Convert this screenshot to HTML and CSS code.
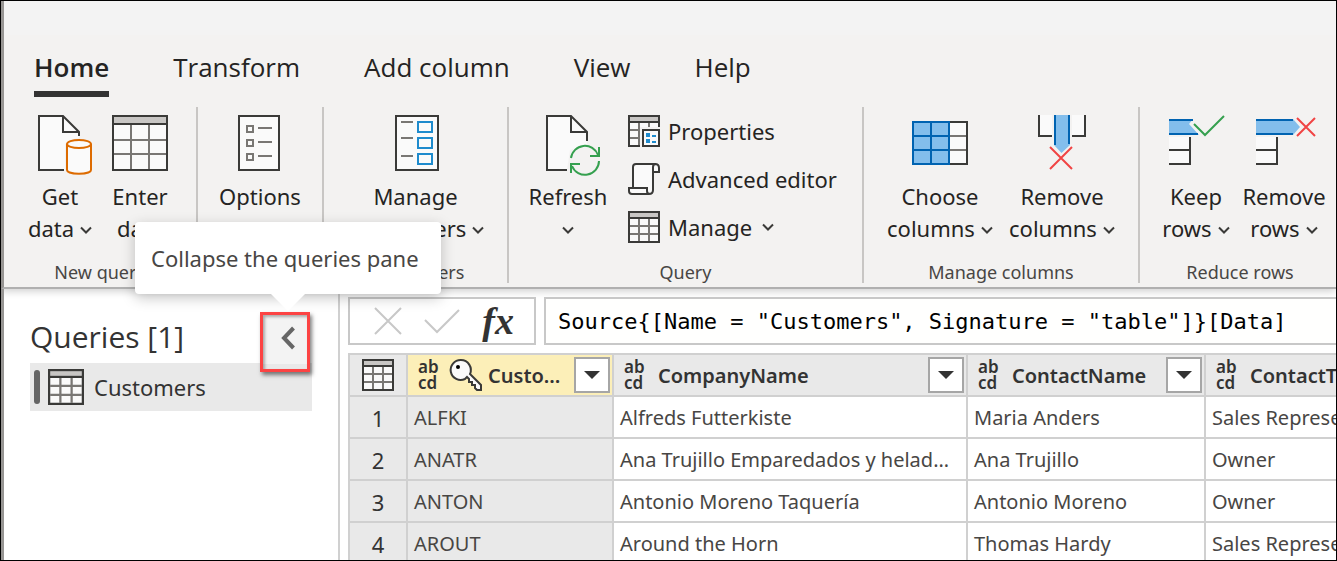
FILE: index.html
```html
<!DOCTYPE html>
<html lang="en">
<head>
<meta charset="utf-8">
<title>Power Query Editor</title>
<link rel="stylesheet" href="styles.css">
</head>
<body>
<svg class="defs" aria-hidden="true">
  <symbol id="table" viewBox="0 0 32 32">
    <path class="paper" d="M1 1H31V31H1Z"/><path class="band" d="M2 2H30V6H2Z"/>
    <path class="grid" d="M11 7V30M21 7V30M2 15H30M2 23H30"/>
    <path class="ink" d="M1 1H31V31H1ZM1 7H31"/>
  </symbol>
  <symbol id="caret" viewBox="0 0 12 8"><path class="caret-line" d="M1 1.500L6 6.500L11 1.500"/></symbol>
</svg>
<div class="app">
  <div class="titlebar"></div>
  <nav class="tabs">
    <button class="tab active">Home</button>
    <button class="tab">Transform</button>
    <button class="tab">Add column</button>
    <button class="tab">View</button>
    <button class="tab">Help</button>
  </nav>

  <div class="ribbon">
    <section class="group g-new">
      <div class="tools">
        <button class="tool w80">
          <svg class="big" viewBox="0 0 64 62"><path class="fill" d="M11 2H35L51 18V56H11Z"/><path class="ink" d="M36 56H11V2H35L51 18V22M35 2V18H51"/><path class="halo" d="M37 30Q51 18 65 30V62H37Z"/><path class="db" d="M39 30V56C39 61 63 61 63 56V30"/><ellipse class="db" cx="51" cy="30" rx="12" ry="4"/></svg>
          <span>Get<br>data<svg class="caret"><use href="#caret"/></svg></span>
        </button>
        <button class="tool w80">
          <svg class="big" viewBox="0 0 64 62"><path class="fill" d="M5 2H59V56H5Z"/><path class="band" d="M6 3H58V9H6Z"/><path class="grid" d="M23 10V55M41 10V55M6 26H58M6 40H58"/><path class="ink" d="M5 2H59V56H5ZM5 10H59"/></svg>
          <span>Enter<br>data</span>
        </button>
      </div>
      <h2>New query</h2>
    </section>
    <section class="group g-options">
      <div class="tools">
        <button class="tool w80">
          <svg class="big" viewBox="0 0 64 62"><path class="paper ink" d="M11 2H51V56H11Z"/><path class="grid" d="M19 12h6v6h-6ZM19 26h6v6h-6ZM19 40h6v6h-6ZM30 14H44M30 28H44M30 42H44"/></svg>
          <span>Options</span>
        </button>
      </div>
    </section>
    <section class="group g-params">
      <div class="tools">
        <button class="tool">
          <svg class="big" viewBox="0 0 64 62"><path class="paper ink" d="M12 2H54V56H12Z"/><path class="grid" d="M17 8H29M17 24H29M17 42H29"/><path class="azure" d="M34 8h14v10h-14ZM34 24h14v10h-14ZM34 40h14v10h-14Z"/></svg>
          <span>Manage<br>parameters<svg class="caret"><use href="#caret"/></svg></span>
        </button>
      </div>
      <h2>Parameters</h2>
    </section>
    <section class="group g-query">
      <div class="tools query-tools">
        <button class="tool w80">
          <svg class="big" viewBox="0 0 64 62"><path class="fill" d="M11 2H35L51 18V30L34 36L31 56H11Z"/><path class="ink" d="M31 56H11V2H35L51 18V27M35 2V18H51"/><path class="green" d="M35 44A14 14 0 0 1 62 41M54 42H63V33M63 47A14 14 0 0 1 36 52M44 50H35V59"/></svg>
          <span>Refresh<br><svg class="caret alone"><use href="#caret"/></svg></span>
        </button>
        <div class="stack">
          <button class="row-tool">
            <svg class="small" viewBox="0 0 32 32"><path class="fill" d="M1 1H31V31H1Z"/><path class="band" d="M2 2H30V6H2Z"/><path class="grid" d="M11 7V30M21 7V12M2 15H14M2 23H12"/><path class="ink" d="M12 31H1V1H31V12M1 7H31"/><path class="halo" d="M12 12H32V32H12Z"/><path class="paper ink" d="M15 15H31V31H15Z"/><path class="blocks" d="M18 18h4v4h-4ZM24 20h4v2h-4ZM18 24h4v4h-4ZM24 26h4v2h-4Z"/></svg>
            Properties
          </button>
          <button class="row-tool">
            <svg class="small" viewBox="0 0 32 32"><path class="paper ink" d="M5 25V4Q5 1 8 1H27Q31 1 31 5V9H25V27Q25 31 21 31H4Q1 31 1 28V25H19V28Q19 31 22 31M25 9V4Q25 1 28 1"/></svg>
            Advanced editor
          </button>
          <button class="row-tool">
            <svg class="small"><use href="#table"/></svg>
            Manage<svg class="caret"><use href="#caret"/></svg>
          </button>
        </div>
      </div>
      <h2>Query</h2>
    </section>
    <section class="group g-columns">
      <div class="tools">
        <button class="tool w122">
          <svg class="big" viewBox="0 0 64 62"><path class="fill" d="M41 8H59V50H41Z"/><path class="grid" d="M42 22H58M42 36H58"/><path class="ink" d="M41 8H59V50H41"/><path class="blue" d="M5 8H41V50H5ZM23 8V50M5 22H41M5 36H41"/></svg>
          <span>Choose<br>columns<svg class="caret"><use href="#caret"/></svg></span>
        </button>
        <button class="tool w122">
          <svg class="big" viewBox="0 0 64 62"><path class="fill" d="M9 1H22V22H9ZM42 1H55V22H42Z"/><path class="ink" d="M9 1V22H22M42 22H55V1"/><path class="sky" d="M24 1H40V31L31.500 39L24 31Z"/><path class="navy" d="M25 1V31M39 1V30"/><path class="red" d="M20 33L42 55M42 33L20 55"/></svg>
          <span>Remove<br>columns<svg class="caret"><use href="#caret"/></svg></span>
        </button>
      </div>
      <h2>Manage columns</h2>
    </section>
    <section class="group g-rows">
      <div class="tools">
        <button class="tool w88">
          <svg class="big" viewBox="0 0 64 62"><path class="sky" d="M5 5H29L25 10L35 21H5Z"/><path class="navy" d="M5 6H29M5 20H34"/><path class="fill" d="M5 23H26V50H5Z"/><path class="ink" d="M26 23V50H5M5 36H26"/><path class="green" d="M30 10L41 21L60 2"/></svg>
          <span>Keep<br>rows<svg class="caret"><use href="#caret"/></svg></span>
        </button>
        <button class="tool w88">
          <svg class="big" viewBox="0 0 64 62"><path class="sky" d="M4 5H41L48 13L41 21H4Z"/><path class="navy" d="M4 6H41M4 20H41"/><path class="fill" d="M4 23H25V50H4Z"/><path class="ink" d="M25 23V50H4M4 36H25"/><path class="red" d="M45 4L63 22M63 4L45 22"/></svg>
          <span>Remove<br>rows<svg class="caret"><use href="#caret"/></svg></span>
        </button>
      </div>
      <h2>Reduce rows</h2>
    </section>
  </div>

  <div class="workspace">
    <aside class="queries">
      <header class="pane-head">
        <h1>Queries [1]</h1>
        <div class="collapse-wrap">
          <button class="collapse" aria-label="Collapse the queries pane" aria-describedby="tip">
            <svg viewBox="0 0 16 24"><path d="M13.500 2L4 12L13.500 22"/></svg>
          </button>
          <div class="highlight"></div>
          <div class="tooltip" id="tip" role="tooltip">Collapse the queries pane</div>
        </div>
      </header>
      <button class="query-item"><i class="marker"></i><svg class="item-icon"><use href="#table"/></svg>Customers</button>
    </aside>

    <main class="main">
      <div class="formula">
        <div class="formula-tools">
          <button aria-label="Cancel"><svg class="f-cross" viewBox="0 0 28 28"><path class="pale" d="M1 1L27 27M27 1L1 27"/></svg></button>
          <button aria-label="Apply"><svg class="f-check" viewBox="0 0 36 24"><path class="pale" d="M1 11L13 23L35 1"/></svg></button>
          <button class="fx" aria-label="Insert step">fx</button>
        </div>
        <input class="formula-input" aria-label="Formula" value='Source{[Name = "Customers", Signature = "table"]}[Data]'>
      </div>
      <table class="data">
        <colgroup><col class="c-num"><col class="c-id"><col class="c-company"><col class="c-contact"><col class="c-title"></colgroup>
        <thead>
          <tr>
            <th class="corner"><svg class="small"><use href="#table"/></svg></th>
            <th class="key"><div class="head"><span class="abcd">ab<br>cd</span><svg class="small key-icon" viewBox="0 0 32 32"><path class="paper ink" d="M11 1A10 10 0 1 0 15 20L17 18L19 20V23H22V26H25V29L27 31H31V26L20 15A10 10 0 0 0 11 1Z"/><circle cx="8" cy="8" r="2"/></svg><span class="name">CustomerID</span><button class="filter" aria-label="Filter CustomerID"></button></div></th>
            <th><div class="head"><span class="abcd">ab<br>cd</span><span class="name">CompanyName</span><button class="filter" aria-label="Filter CompanyName"></button></div></th>
            <th><div class="head"><span class="abcd">ab<br>cd</span><span class="name">ContactName</span><button class="filter" aria-label="Filter ContactName"></button></div></th>
            <th><div class="head"><span class="abcd">ab<br>cd</span><span class="name">ContactTitle</span><button class="filter" aria-label="Filter ContactTitle"></button></div></th>
          </tr>
        </thead>
        <tbody>
          <tr><td>1</td><td>ALFKI</td><td>Alfreds Futterkiste</td><td>Maria Anders</td><td>Sales Representative</td></tr>
          <tr><td>2</td><td>ANATR</td><td>Ana Trujillo Emparedados y helados</td><td>Ana Trujillo</td><td>Owner</td></tr>
          <tr><td>3</td><td>ANTON</td><td>Antonio Moreno Taquería</td><td>Antonio Moreno</td><td>Owner</td></tr>
          <tr><td>4</td><td>AROUT</td><td>Around the Horn</td><td>Thomas Hardy</td><td>Sales Representative</td></tr>
        </tbody>
      </table>
    </main>
  </div>
</div>
</body>
</html>
```
FILE: styles.css
```css
* { box-sizing: border-box; }
body { margin: 0; font-family: "Noto Sans", "Open Sans", sans-serif; color: #252423; }
button { border: 0; padding: 0; background: none; font: inherit; color: inherit; }
h1, h2 { margin: 0; font-weight: 400; }
svg { overflow: visible; flex: none; }
.defs { position: absolute; width: 0; height: 0; }

/* Icon strokes and fills */
.ink, .grid, .db, .azure, .green, .red, .navy, .blue, .pale, .caret-line { fill: none; stroke-width: 2; }
.paper, .fill { fill: #fafafa; }
.ink { stroke: #3a3a38; }
.band { fill: #c8c6c4; }
.grid { stroke: #797774; }
.halo { fill: #f3f2f1; }
.db { fill: #fafafa; stroke: #dd6b00; }
.azure { stroke: #1e8bcd; }
.blocks { fill: #1e8bcd; }
.green { stroke: #35a04f; }
.red { stroke: #f04444; }
.sky { fill: #83beec; }
.navy { stroke: #0063b1; }
.blue { fill: #83beec; stroke: #0063b1; }
.pale { stroke: #c8c8c8; }
.caret-line { stroke: #3a3a38; }
.paper.ink { fill: #fafafa; }

.app { display: flex; flex-direction: column; height: 100vh; overflow: hidden; border: 1px solid #000; background: #fff; }
.app > * { border-left: 3px solid #979593; }
.titlebar { flex: none; height: 34px; background: #f3f3f3; }
.tabs { position: relative; z-index: 1; display: flex; flex: none; gap: 64px; height: 72px; padding: 8px 30px; background: #f3f2f1; }
.tab { display: flex; align-items: center; height: 54px; font-family: "Open Sans", "Noto Sans", sans-serif; font-size: 26px; border-bottom: 6px solid transparent; }
.tab.active { font-weight: 600; border-color: #333; }

.ribbon { display: flex; flex: none; height: 182px; background: #f3f2f1; border-bottom: 2px solid #b0b0b0; box-shadow: 0 2px 8px rgba(0,0,0,.2); }
.group { display: flex; flex: none; flex-direction: column; align-items: center; margin-bottom: 4px; border-right: 2px solid #c8c6c4; }
.group:last-child { border: 0; }
.g-new { width: 194px; }
.g-options { width: 126px; }
.g-params { width: 185px; }
.g-query { width: 355px; }
.g-columns { width: 276px; }
.g-rows { width: 200px; }
.group h2 { margin-top: 16px; font-size: 18px; line-height: 24px; color: #484644; white-space: nowrap; }
.tools { display: flex; height: 140px; }
.tool { display: flex; flex-direction: column; align-items: center; justify-content: flex-start; padding-top: 7px; gap: 4px; font-size: 22px; line-height: 32px; white-space: nowrap; }
.w80 { width: 80px; }
.w88 { width: 88px; }
.w122 { width: 122px; }
.big { width: 64px; height: 62px; }
.small { width: 32px; height: 32px; }
.caret { width: 12px; height: 8px; margin-left: 6px; vertical-align: 3px; }
.caret.alone { margin-left: 0; }
.row-tool .caret { margin-left: 2px; }
.query-tools { align-self: flex-start; gap: 20px; padding-left: 19px; }
.stack { display: flex; flex-direction: column; gap: 16px; padding-top: 8px; }
.row-tool { display: flex; align-items: center; gap: 8px; height: 32px; font-size: 22px; white-space: nowrap; }

.workspace { display: flex; flex: 1; min-height: 0; }
.queries { flex: none; width: 336px; padding: 23px 26px 0; border-right: 2px solid #d0d0d0; }
.pane-head { display: flex; justify-content: space-between; height: 51px; padding-right: 2px; }
.pane-head h1 { font-family: "Open Sans", "Noto Sans", sans-serif; font-size: 30px; line-height: 50px; color: #333; }
.collapse-wrap { position: relative; width: 50px; height: 60px; }
.collapse { display: flex; align-items: center; justify-content: center; width: 100%; height: 52px; padding-left: 6px; background: #f3f3f3; }
.collapse svg { width: 16px; height: 24px; fill: none; stroke: #666; stroke-width: 4; }
.highlight { position: absolute; inset: 0; border: 3px solid #fc4343; box-shadow: 2px 3px 4px rgba(0,0,0,.5), inset 2px 2px 3px rgba(0,0,0,.3); }
.tooltip { position: absolute; right: -131px; bottom: 78px; width: 306px; padding: 20px 0 20px 16px; border-radius: 4px; background: #fff; box-shadow: 0 4px 14px rgba(0,0,0,.22); font-size: 22px; line-height: 32px; color: #484644; white-space: nowrap; z-index: 2; }
.tooltip::after { content: ""; position: absolute; top: 100%; left: 136px; border: 17px solid transparent; border-top-color: #fff; border-bottom: 0; }
.query-item { display: flex; align-items: center; width: 100%; height: 48px; padding-left: 4px; background: #e9e9e9; font-size: 22px; color: #333; }
.marker { width: 6px; height: 34px; margin-right: 8px; border-radius: 3px; background: #666; }
.item-icon { width: 36px; height: 36px; margin-right: 10px; }

.main { flex: 1; min-width: 0; padding: 8px 0 0 8px; overflow: hidden; }
.formula { display: flex; gap: 8px; height: 48px; margin-bottom: 8px; }
.formula-tools { display: flex; flex: none; align-items: center; justify-content: space-between; width: 188px; padding: 0 20px 0 24px; border: 2px solid #c8c8c8; }
.formula-tools svg { display: block; }
.f-cross { width: 28px; height: 28px; }
.f-check { width: 36px; height: 24px; }
.fx { font: italic bold 38px/40px "Liberation Serif", serif; color: #333; }
.formula-input { flex: 1; min-width: 0; padding: 0 12px; border: 2px solid #c8c8c8; border-right: 0; background: #fffffe; font: 22px "DejaVu Sans Mono", monospace; color: #000; }

.data { width: 1106px; table-layout: fixed; border-spacing: 0; border: solid #d0d0d0; border-width: 2px 0 0 2px; font-size: 20px; color: #484644; }
.c-num { width: 58px; }
.c-id { width: 206px; }
.c-company { width: 354px; }
.c-contact { width: 238px; }
.c-title { width: 248px; }
.data th, .data td { height: 42px; padding: 0; border: solid #d0d0d0; border-width: 0 2px 2px 0; overflow: hidden; text-overflow: ellipsis; white-space: nowrap; text-align: left; }
.data td { padding: 2px 14px 0 6px; line-height: 38px; }
.data th { background: #e9e9e9; font-weight: 600; color: #333; }
.data th.key { background: #fcefb8; }
.data th.corner { text-align: center; vertical-align: middle; }
.corner svg { display: block; margin: auto; }
.data td:first-child { padding-right: 6px; text-align: center; font-size: 22px; color: #333; }
.data td:nth-child(-n+2) { background: #e9e9e9; }
.head { display: flex; align-items: center; height: 40px; padding: 0 2px 0 10px; }
.abcd { flex: none; width: 20px; margin-right: 14px; font-size: 17px; line-height: 16px; }
.key .abcd { margin-right: 12px; }
.key-icon { margin-right: 6px; }
.name { flex: 1; min-width: 0; overflow: hidden; text-overflow: ellipsis; }
.filter { display: flex; flex: none; align-items: center; justify-content: center; width: 36px; height: 36px; margin-left: 4px; border: 2px solid #a6a6a6; background: #fff; }
.filter::before { content: ""; border: 8px solid transparent; border-top-color: #333; border-bottom: 0; }
```
